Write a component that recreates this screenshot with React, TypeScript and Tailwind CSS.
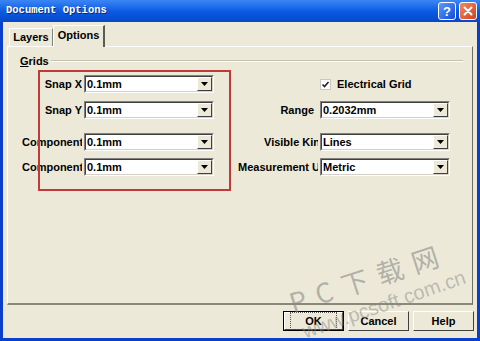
import React from 'react';

const UI = "font-['Liberation_Sans',Arial,sans-serif]";

function Combo({ value }: { value: string }) {
  return (
    <div className="w-[130px] h-[18px] flex border border-t-[#808080] border-l-[#808080] border-b-white border-r-white">
      <div className="flex-1 flex bg-white border border-t-[#404040] border-l-[#404040] border-b-[#d4d0c8] border-r-[#d4d0c8]">
        <div className="flex-1 pl-[1px] text-[11px] font-bold leading-[14px] text-black">{value}</div>
        <div className="w-[15px] flex items-center justify-center bg-[#ECE9D8] border border-t-white border-l-white border-b-[#404040] border-r-[#404040]">
          <svg width="7" height="4" viewBox="0 0 7 4">
            <polygon points="0,0 7,0 3.5,4" fill="#000" />
          </svg>
        </div>
      </div>
    </div>
  );
}

function Field({ label, value, box, pad = 0 }: { label: string; value: string; box: string; pad?: number }) {
  return (
    <div className="flex items-center">
      <div className={`${box} overflow-hidden whitespace-nowrap text-right text-[11px] font-bold text-black`} style={{ paddingRight: pad }}>
        {label}
      </div>
      <div className="ml-[2px]">
        <Combo value={value} />
      </div>
    </div>
  );
}

function Btn({ label, def }: { label: string; def?: boolean }) {
  return (
    <div className={`w-[61px] h-[20px] ${def ? 'border border-black' : ''}`}>
      <div className="w-full h-full flex items-center justify-center bg-[#ECE9D8] border border-t-white border-l-white border-b-[#404040] border-r-[#404040] text-[11px] font-bold text-black">
        <span className={def ? 'outline outline-1 outline-dotted outline-[#555] px-[14px]' : ''}>{label}</span>
      </div>
    </div>
  );
}

export default function App() {
  return (
    <div className={`relative w-[480px] h-[341px] overflow-hidden flex flex-col bg-[#0A3FCB] ${UI}`}>
      {/* Title bar */}
      <div className="h-[22px] flex items-center justify-between pl-[6px] pr-[3px] bg-gradient-to-b from-[#3B86F5] via-[#0B5BE3] to-[#0648C8]">
        <span className="font-['Liberation_Mono',monospace] font-bold text-[10.5px] text-white [text-shadow:1px_1px_0_#0A2A7A]">
          Document Options
        </span>
        <div className="flex gap-[3px]">
          <div className="w-[18px] h-[18px] rounded-[3px] border border-white flex items-center justify-center bg-gradient-to-br from-[#5B9BFF] to-[#1648D8] text-white font-bold text-[13px] leading-none">
            ?
          </div>
          <div className="w-[18px] h-[18px] rounded-[3px] border border-white flex items-center justify-center bg-gradient-to-br from-[#F08A62] to-[#D2401C]">
            <svg width="10" height="10" viewBox="0 0 10 10">
              <path d="M1.5 1.5 L8.5 8.5 M8.5 1.5 L1.5 8.5" stroke="#fff" strokeWidth="2" strokeLinecap="round" />
            </svg>
          </div>
        </div>
      </div>

      {/* Body */}
      <div className="flex-1 mx-[3px] mb-[3px] bg-[#ECE9D8] flex flex-col pt-[3px]">
        {/* Tabs */}
        <div className="h-[21px] flex items-end pl-[6px]">
          <div className="h-[18px] w-[44px] flex items-center justify-center border-t border-l border-white border-r border-r-[#808080] text-[11px] font-bold text-black">
            Layers
          </div>
          <div className="relative z-10 h-[22px] -mb-[1px] w-[52px] flex items-center justify-center bg-[#ECE9D8] border-t border-l border-white border-r-2 border-r-[#5E5C52] text-[11px] font-bold text-black pb-[3px]">
            Options
          </div>
        </div>

        {/* Panel */}
        <div className="relative mx-[4px] h-[259px] border border-t-white border-l-white border-r-[#716F64] border-b-2 border-b-[#8A8878] flex flex-col">
          {/* group header */}
          <div className="mt-[7px] h-[14px] flex items-center pl-[12px] pr-[9px]">
            <span className="text-[11px] font-bold text-black">
              <span className="underline">G</span>rids
            </span>
            <div className="flex-1 ml-[2px] border-t border-t-[#C5C2B2] border-b border-b-white" />
          </div>

          <div className="pl-[14px] mt-[7px] flex flex-col">
            <div className="flex items-center">
              <div className="w-[192px]">
                <Field label="Snap X" value="0.1mm" box="w-[61px]" />
              </div>
              <div className="ml-[24px] flex items-center">
                <div className="w-[80px]" />
                <div className="ml-[2px] flex items-center gap-[6px]">
                  <div className="w-[11px] h-[11px] bg-white border border-[#C8C8C8] flex items-center justify-center">
                    <svg width="9" height="9" viewBox="0 0 9 9">
                      <path d="M1.5 4.5 L3.5 6.5 L7.5 2" stroke="#222" strokeWidth="1.6" fill="none" />
                    </svg>
                  </div>
                  <span className="text-[11px] font-bold text-black">Electrical Grid</span>
                </div>
              </div>
            </div>

            <div className="flex items-center mt-[8px]">
              <div className="w-[192px]">
                <Field label="Snap Y" value="0.1mm" box="w-[61px]" />
              </div>
              <div className="ml-[24px]">
                <Field label="Range" value="0.2032mm" box="w-[80px]" pad={4} />
              </div>
            </div>

            <div className="flex items-center mt-[14px]">
              <div className="w-[192px]">
                <Field label="Component X" value="0.1mm" box="w-[61px]" />
              </div>
              <div className="ml-[24px] flex items-center">
                <div className="w-[26px]" />
                <Field label="Visible Kind" value="Lines" box="w-[54px]" />
              </div>
            </div>

            <div className="flex items-center mt-[7px]">
              <div className="w-[192px]">
                <Field label="Component Y" value="0.1mm" box="w-[61px]" />
              </div>
              <div className="ml-[24px]">
                <Field label="Measurement Unit" value="Metric" box="w-[80px]" />
              </div>
            </div>
          </div>

          {/* red annotation */}
          <div className="absolute left-[30px] top-[23px] w-[193px] h-[121px] border-2 border-[#C03A3A]" />
        </div>

        {/* Buttons */}
        <div className="mt-[6px] flex justify-end gap-[4px] pr-[3px]">
          <Btn label="OK" def />
          <Btn label="Cancel" />
          <Btn label="Help" />
        </div>
      </div>

      {/* watermark */}
      <div className="pointer-events-none absolute left-[290px] top-[283px] -rotate-[18deg] origin-left text-[27px] tracking-[10px] text-[#8A8A8A]/60 font-['Noto_Sans_CJK_SC',sans-serif] whitespace-nowrap">
        PC下载网
      </div>
      <div className="pointer-events-none absolute left-[303px] top-[317px] -rotate-[19deg] origin-left text-[20px] text-[#8A8A8A]/50 font-['Liberation_Sans',sans-serif] whitespace-nowrap">
        www.pcsoft.com.cn
      </div>
    </div>
  );
}
